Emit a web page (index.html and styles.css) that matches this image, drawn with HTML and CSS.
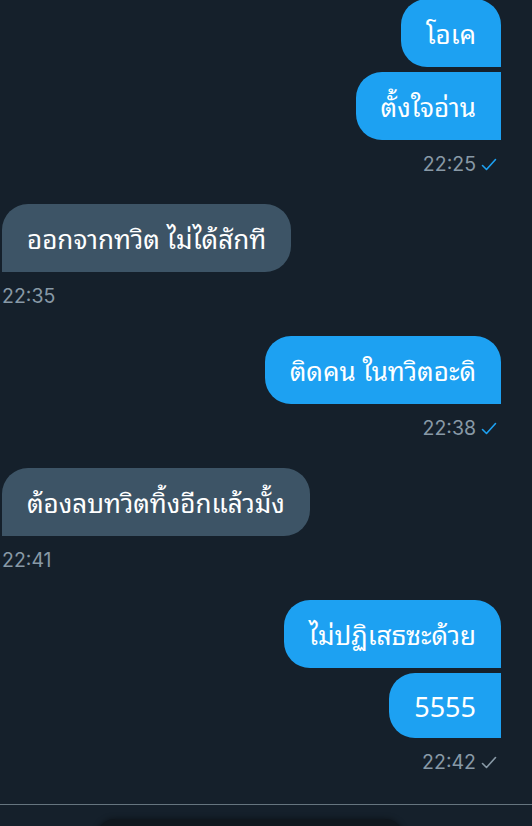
FILE: index.html
```html
<!DOCTYPE html>
<html lang="th">
<head>
<meta charset="utf-8">
<title>Messages</title>
<link rel="stylesheet" href="styles.css">
</head>
<body>
<div class="thread">
  <div class="group out">
    <div class="bubble out">โอเค</div>
    <div class="bubble out mid">ตั้งใจอ่าน</div>
    <div class="time">22:25 <svg class="check read" viewBox="0 0 16 13" width="16" height="13"><polyline points="1.5,7.5 5.5,11.5 14.5,1.5"/></svg></div>
  </div>
  <div class="group in">
    <div class="bubble in">ออกจากทวิต ไม่ได้สักที</div>
    <div class="time">22:35</div>
  </div>
  <div class="group out">
    <div class="bubble out">ติดคน ในทวิตอะดิ</div>
    <div class="time">22:38 <svg class="check read" viewBox="0 0 16 13" width="16" height="13"><polyline points="1.5,7.5 5.5,11.5 14.5,1.5"/></svg></div>
  </div>
  <div class="group in">
    <div class="bubble in">ต้องลบทวิตทิ้งอีกแล้วมั้ง</div>
    <div class="time">22:41</div>
  </div>
  <div class="group out">
    <div class="bubble out">ไม่ปฏิเสธซะด้วย</div>
    <div class="bubble out mid short">5555</div>
    <div class="time">22:42 <svg class="check" viewBox="0 0 16 13" width="16" height="13"><polyline points="1.5,7.5 5.5,11.5 14.5,1.5"/></svg></div>
  </div>
</div>
<div class="composer">
  <div class="composer-box"></div>
</div>
</body>
</html>
```
FILE: styles.css
```css
html, body {
  margin: 0;
  padding: 0;
  background: #15202b;
  height: 100%;
  overflow: hidden;
}
body {
  font-family: "Noto Sans Thai Looped", "Thonburi", "Noto Sans Thai", "Noto Sans", "DejaVu Sans", sans-serif;
  color: #ffffff;
}
.thread {
  display: flex;
  flex-direction: column;
  gap: 30px;
  margin-top: -1px;
  padding: 0 31px 0 2px;
}
.group {
  display: flex;
  flex-direction: column;
  gap: 5px;
}
.group.out { align-items: flex-end; }
.group.in { align-items: flex-start; }
.bubble {
  height: 68px;
  box-sizing: border-box;
  display: flex;
  align-items: center;
  padding: 0 25px 2px;
  font-size: 26px;
  white-space: nowrap;
  border-radius: 26px;
}
.bubble.out {
  background: #1da1f2;
  border-bottom-right-radius: 0;
}
.bubble.out.mid {
  border-top-right-radius: 0;
}
.bubble.short {
  height: 65px;
  font-size: 27px;
}
.bubble.in {
  background: #3d5466;
  border-bottom-left-radius: 0;
}
.time {
  margin-top: 9px;
  height: 20px;
  line-height: 20px;
  font-family: "Inter", "Roboto", sans-serif;
  font-size: 19.5px;
  color: #8899a6;
  display: flex;
  align-items: center;
  gap: 5px;
  padding-right: 4px;
}
.group.in .time { padding-right: 0; }
.check {
  fill: none;
  stroke: #8899a6;
  stroke-width: 1.6;
  stroke-linecap: round;
  stroke-linejoin: round;
}
.check.read { stroke: #1da1f2; }
.composer {
  margin-top: 32px;
  border-top: 1px solid #66757f;
  height: 40px;
  display: flex;
}
.composer-box {
  margin: 14px 0 0 97px;
  width: 306px;
  height: 30px;
  background: #10171e;
  border-radius: 18px 18px 0 0;
  box-shadow: 0 0 6px rgba(0, 0, 0, 0.45);
}
```
